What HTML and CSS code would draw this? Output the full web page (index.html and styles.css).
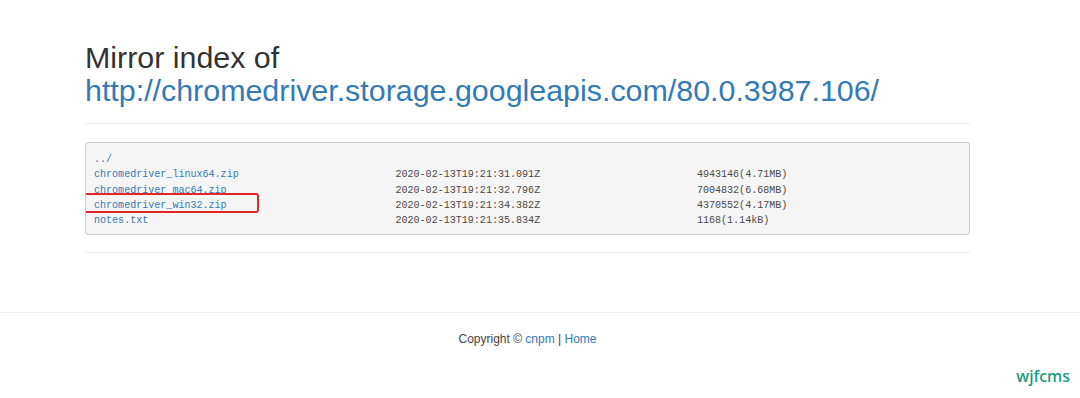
FILE: index.html
```html
<!DOCTYPE html>
<html>
<head>
<meta charset="utf-8">
<title>Mirror index</title>
<link rel="stylesheet" href="styles.css">
</head>
<body>
<div class="container">
  <h1 class="title">Mirror index of <a href="#">http://chromedriver.storage.googleapis.com/80.0.3987.106/</a></h1>
  <hr class="rule">
  <pre class="listing"><a href="#">../</a>
<a href="#">chromedriver_linux64.zip</a>                          2020-02-13T19:21:31.091Z                          4943146(4.71MB)
<a href="#">chromedriver_mac64.zip</a>                            2020-02-13T19:21:32.796Z                          7004832(6.68MB)
<span class="mark"><a href="#">chromedriver_win32.zip</a><span class="mark-box"></span></span>                            2020-02-13T19:21:34.382Z                          4370552(4.17MB)
<a href="#">notes.txt</a>                                         2020-02-13T19:21:35.834Z                          1168(1.14kB)</pre>
  <hr class="rule rule-bottom">
</div>
<footer class="footer">
  <div class="footer-inner">Copyright © <a href="#">cnpm</a> | <a href="#">Home</a></div>
</footer>
<div class="watermark">wjfcms</div>
</body>
</html>
```
FILE: styles.css
```css
html, body {
  margin: 0;
  padding: 0;
  background: #fff;
}
body {
  font-family: "Liberation Sans", Arial, sans-serif;
  color: #333;
  width: 1080px;
  height: 398px;
  overflow: hidden;
  position: relative;
}
a {
  color: #337ab7;
  text-decoration: none;
}
.container {
  width: 885px;
  margin-left: 85px;
  padding-top: 41px;
}
.title {
  margin: 0;
  font-size: 30.4px;
  font-weight: normal;
  line-height: 33px;
  color: #333;
}
.rule {
  border: 0;
  border-top: 1px solid #eee;
  margin: 16px 0 18px 0;
}
.listing {
  margin: 0;
  padding: 9px 8px 6px 8px;
  background: #f5f5f5;
  border: 1px solid #ccc;
  border-radius: 3px;
  font-family: "Liberation Mono", "DejaVu Sans Mono", monospace;
  font-size: 10.05px;
  line-height: 15.3px;
  color: #4a4a4a;
  overflow: hidden;
}
.mark {
  position: relative;
}
.mark-box {
  position: absolute;
  left: -14px;
  top: -7px;
  width: 179px;
  height: 20px;
  border: 2px solid #e3262a;
  border-radius: 3px;
  box-sizing: border-box;
}
.rule-bottom {
  margin: 17px 0 0 0;
}
.footer {
  margin-top: 59px;
  border-top: 1px solid #eee;
}
.footer-inner {
  width: 885px;
  margin-left: 85px;
  text-align: center;
  font-size: 12px;
  line-height: 16px;
  padding-top: 18px;
  color: #444;
}
.watermark {
  position: absolute;
  right: 10px;
  bottom: 11px;
  font-family: "Noto Sans", "Liberation Sans", sans-serif;
  font-size: 16px;
  font-weight: 500;
  color: #139a7c;
}
```
